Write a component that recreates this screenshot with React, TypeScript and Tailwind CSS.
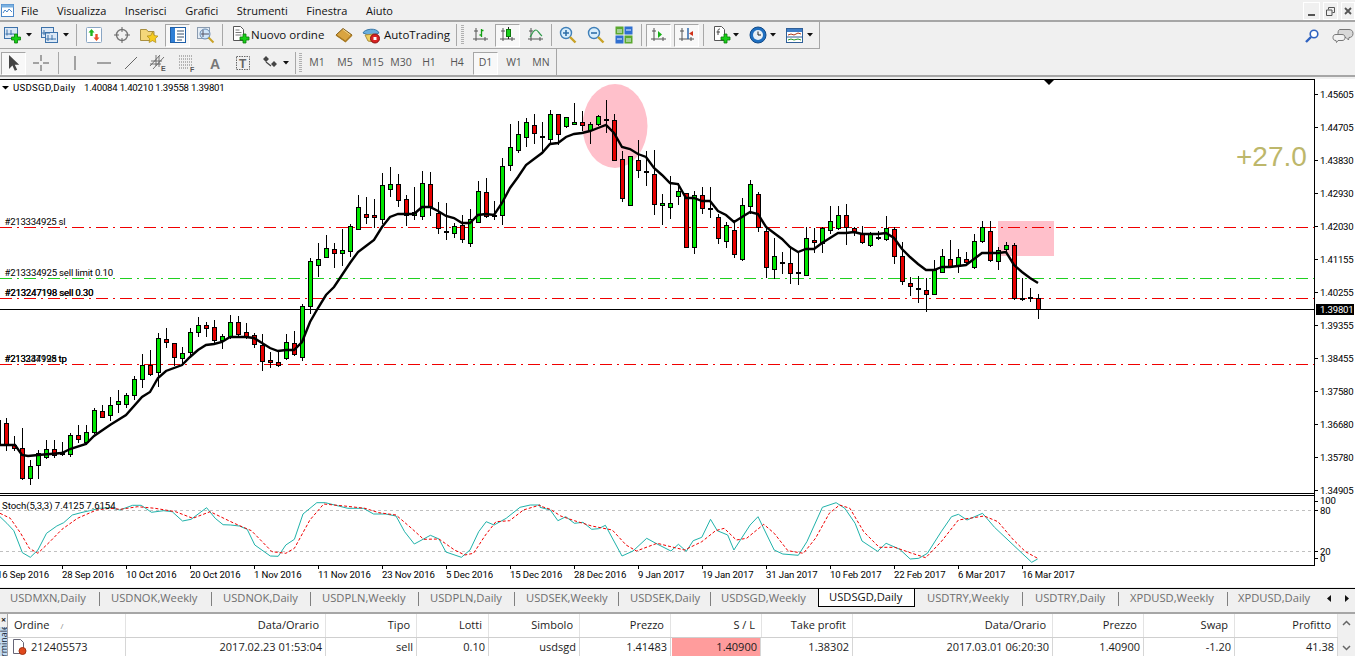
import React from "react";

const uiFont = "[font-family:'Open_Sans','Noto_Sans',sans-serif]";

// candles: body top, body bottom, wick top, wick bottom, colour (g/r/d)
type Candle = [number, number, number, number, string];
const candles: Candle[] = [
  [420,445,420,445,"r"],[423,445,418,450,"r"],[445,448,436,450,"r"],[448,478,428,479,"r"],[466,478,460,484,"g"],[453,465,450,478,"g"],
  [449,457,440,458,"g"],[449,455,440,457,"r"],[452,454,442,455,"d"],[435,454,433,456,"g"],[435,439,425,442,"r"],[432,442,425,444,"g"],
  [410,432,408,433,"g"],[411,417,405,417,"r"],[405,415,397,420,"g"],[401,404,390,412,"g"],[395,404,393,407,"g"],[379,395,376,399,"g"],
  [365,379,354,387,"g"],[365,374,350,375,"r"],[338,372,333,386,"g"],[339,342,328,347,"r"],[343,357,343,365,"r"],[353,358,347,363,"g"],
  [332,352,328,357,"g"],[325,332,317,336,"g"],[325,328,322,336,"r"],[327,340,320,343,"r"],[336,340,334,348,"g"],[322,336,315,338,"g"],
  [322,334,316,336,"r"],[332,336,323,338,"r"],[335,344,333,347,"r"],[345,361,334,370,"r"],[360,362,352,367,"r"],[362,365,350,366,"r"],
  [342,358,334,359,"g"],[343,354,331,355,"r"],[306,357,304,360,"g"],[261,306,258,313,"g"],[259,265,243,276,"g"],[248,257,235,257,"g"],
  [249,253,243,267,"r"],[250,253,229,265,"g"],[226,251,224,256,"g"],[207,229,195,229,"g"],[214,217,197,223,"r"],[215,217,199,227,"r"],
  [185,219,173,223,"g"],[184,189,167,196,"g"],[184,200,174,206,"r"],[199,215,195,225,"r"],[212,215,187,219,"g"],[183,216,171,219,"g"],
  [184,206,172,215,"r"],[213,228,202,233,"r"],[231,232,203,239,"d"],[226,233,223,237,"g"],[225,239,215,242,"r"],[219,243,209,246,"g"],
  [191,222,181,222,"g"],[192,216,178,217,"r"],[215,216,201,219,"d"],[166,215,158,224,"g"],[147,165,124,170,"g"],[134,150,121,152,"g"],
  [122,137,118,146,"g"],[125,133,114,143,"r"],[136,137,122,150,"d"],[114,139,110,142,"g"],[114,134,114,144,"r"],[117,126,117,127,"g"],
  [122,124,103,124,"g"],[122,125,111,130,"r"],[124,130,122,143,"g"],[116,124,115,125,"g"],[119,120,100,132,"d"],[120,160,114,160,"r"],
  [159,198,151,201,"r"],[156,205,156,205,"g"],[160,170,140,177,"r"],[171,172,151,185,"d"],[174,204,150,214,"r"],[203,205,194,224,"g"],
  [203,207,176,218,"g"],[191,196,183,204,"g"],[193,247,193,247,"r"],[195,247,191,253,"g"],[195,208,187,213,"r"],[208,209,187,217,"d"],
  [217,238,214,243,"r"],[225,241,222,247,"g"],[230,254,222,257,"r"],[205,259,198,260,"g"],[184,206,180,213,"g"],[194,227,192,231,"r"],
  [231,267,227,277,"r"],[256,269,238,278,"g"],[262,263,252,273,"d"],[263,273,247,283,"r"],[272,273,253,284,"d"],[238,275,227,275,"g"],
  [240,242,228,252,"r"],[228,243,227,252,"g"],[221,230,206,233,"g"],[215,228,206,229,"g"],[215,227,204,244,"r"],[228,232,227,235,"r"],
  [234,242,226,243,"r"],[234,245,232,246,"g"],[237,238,231,239,"d"],[228,239,216,240,"g"],[229,256,227,263,"r"],[256,281,242,284,"r"],
  [283,286,277,295,"r"],[288,289,276,302,"d"],[290,294,278,311,"r"],[270,294,260,294,"g"],[256,272,249,272,"g"],[259,266,240,266,"r"],
  [257,266,249,272,"g"],[259,262,252,263,"r"],[241,267,234,268,"g"],[227,241,221,242,"g"],[231,260,221,261,"r"],[250,261,247,269,"g"],
  [245,249,242,253,"g"],[245,298,243,299,"r"],[298,299,278,300,"d"],[297,298,288,301,"d"],[298,309,294,318,"r"],
];

const maLine =
  "0,445 15,445 22,455 28,456 38,455 62,453 70,449 86,444 94,436 110,425 126,415 142,397 150,392 158,378 166,371 182,365 190,357 198,350 206,345 214,344 222,342 230,337 246,337 254,338 262,343 270,348 278,351 286,350 294,350 302,342 310,322 318,308 326,295 334,287 342,275 350,263 358,252 366,246 374,240 382,227 390,217 398,214 414,214 422,207 430,207 438,211 446,216 454,218 462,223 470,223 478,215 486,214 494,215 502,203 510,188 518,177 526,165 534,159 542,153 550,144 558,143 566,137 574,134 582,133 590,131 598,128 606,125 614,133 622,147 630,149 638,154 646,157 654,168 662,175 670,183 678,184 686,198 694,198 702,201 710,201 718,211 726,215 734,222 742,217 750,212 758,214 766,227 774,233 782,239 790,247 798,252 806,249 814,249 822,243 830,238 838,233 846,233 854,232 862,234 870,234 878,234 886,233 894,238 902,249 910,257 918,264 926,270 934,270 942,267 950,267 958,266 966,265 974,259 982,253 990,253 998,253 1006,252 1014,265 1022,272 1030,278 1038,283";

// stochastic traces, measured from the two crops: [x, y] in crop units
const tealA = [[0,80],[20,100],[40,122],[65,188],[88,202],[110,180],[135,130],[165,108],[185,98],[210,75],[235,68],[260,62],[290,55],[320,53],[348,60],[385,46],[410,46],[440,67],[475,62],[500,65],[530,93],[555,88],[600,53],[625,85],[648,104],[670,105],[695,108],[718,118],[740,165],[785,198],[808,199],[830,165],[855,148],[880,72],[920,38],[945,38],[1010,55],[1055,55],[1085,72],[1120,72],[1150,78],[1175,125],[1203,162],[1250,136],[1275,147],[1295,186],[1340,202],[1365,180],[1390,125],[1412,95],[1435,105],[1470,85],[1510,52],[1540,45],[1568,45]];
const tealB = [[0,52],[30,60],[52,92],[75,80],[100,100],[125,97],[150,118],[170,116],[190,106],[238,198],[270,183],[310,145],[340,162],[380,183],[402,163],[425,184],[445,152],[470,142],[495,88],[515,122],[545,135],[563,180],[610,105],[633,80],[680,180],[705,192],[750,196],[775,155],[820,52],[860,38],[885,55],[915,100],[935,153],[980,184],[1005,160],[1045,178],[1075,207],[1100,205],[1125,190],[1165,125],[1195,80],[1215,73],[1240,90],[1285,70],[1320,112],[1400,190],[1428,217],[1445,207]];
const redA = [[0,70],[30,85],[60,130],[85,175],[110,190],[145,155],[180,118],[225,85],[280,60],[320,55],[350,58],[400,50],[450,55],[510,65],[560,85],[610,65],[680,100],[730,122],[790,185],[830,190],[855,175],[900,90],[940,42],[1000,48],[1060,55],[1100,68],[1150,75],[1195,115],[1230,148],[1275,147],[1320,180],[1350,195],[1375,190],[1410,135],[1440,95],[1480,92],[1520,60],[1568,45]];
const redB = [[0,48],[30,58],[60,78],[100,92],[150,108],[210,120],[250,165],[280,183],[340,160],[380,170],[420,180],[470,155],[510,122],[535,115],[570,150],[600,145],[650,103],[680,130],[720,182],[765,190],[800,145],[840,70],[870,45],[900,55],[940,125],[985,172],[1030,172],[1075,188],[1120,203],[1165,155],[1215,90],[1290,78],[1330,95],[1375,150],[1410,185],[1445,205]];

const toPoints = (a: number[][], b: number[][]) =>
  [
    ...a.map(([x, y]) => [x / 2.904, y]),
    ...b.map(([x, y]) => [540 + x / 2.904, y]),
  ]
    .map(([x, y]) => `${x.toFixed(1)},${(490 + y / 3).toFixed(1)}`)
    .join(" ");

const priceLabels: [string, number][] = [
  ["1.45605", 95],["1.44705", 128],["1.43830", 161],["1.42930", 194],["1.42030", 227],["1.41155", 260],["1.40255", 293],
  ["1.39355", 326],["1.38455", 359],["1.37580", 392],["1.36680", 425],["1.35780", 458],["1.34905", 491],
];

const dateLabels = [
  "16 Sep 2016","28 Sep 2016","10 Oct 2016","20 Oct 2016","1 Nov 2016","11 Nov 2016","23 Nov 2016","5 Dec 2016","15 Dec 2016",
  "28 Dec 2016","9 Jan 2017","19 Jan 2017","31 Jan 2017","10 Feb 2017","22 Feb 2017","6 Mar 2017","16 Mar 2017",
];

function Chart() {
  const chartText = { fontFamily: "Roboto, sans-serif", fontSize: 9.6, fill: "#000" };
  return (
    <svg width={1355} height={508} viewBox="0 79 1355 508" className="block bg-white">
      <ellipse cx={615} cy={126} rx={32.5} ry={42} fill="#ffc0cb" />
      <rect x={998} y={221} width={56} height={35} fill="#ffc0cb" />

      <g strokeDasharray="12 5 2 5">
        <line x1={0} x2={1314} y1={227.5} y2={227.5} stroke="#f00000" />
        <line x1={0} x2={1314} y1={278.5} y2={278.5} stroke="#20d020" />
        <line x1={0} x2={1314} y1={298.5} y2={298.5} stroke="#f00000" />
        <line x1={0} x2={1314} y1={364.5} y2={364.5} stroke="#f00000" />
      </g>
      <line x1={0} x2={1314} y1={309.5} y2={309.5} stroke="#000" />

      <g shapeRendering="crispEdges">
        {candles.map(([bt, bb, wt, wb, c], idx) => {
          const x = 6 + 8 * (idx - 1);
          return (
            <g key={idx}>
              <rect x={x} y={wt} width={1} height={wb - wt + 1} fill="#000" />
              <rect x={x - 2} y={bt} width={5} height={bb - bt + 1} fill="#000" />
              {c !== "d" && bb - bt > 1 && (
                <rect x={x - 1} y={bt + 1} width={3} height={bb - bt - 1} fill={c === "g" ? "#00e600" : "#e60000"} />
              )}
            </g>
          );
        })}
      </g>
      <polyline points={maLine} fill="none" stroke="#000" strokeWidth={2.4} />

      <path d="M1044 80h10l-5 5z" fill="#000" />
      <text x={1236} y={166} fontFamily="'Liberation Sans', sans-serif" fontSize={28} fill="#bdb76b">+27.0</text>

      <path d="M2 86h7l-3.5 3.5z" fill="#000" />
      <text x={13} y={91} {...chartText} letterSpacing={0.3}>USDSGD,Daily</text>
      <text x={84} y={91} {...chartText} letterSpacing={-0.2}>1.40084 1.40210 1.39558 1.39801</text>

      <text x={4.5} y={225} {...chartText} letterSpacing={-0.25}>#213334925 sl</text>
      <text x={4.5} y={276} {...chartText} letterSpacing={-0.2}>#213334925 sell limit 0.10</text>
      <text x={4.5} y={296} {...chartText} letterSpacing={-0.2}>#213247198 sell 0.30</text>
      <text x={4.8} y={296} {...chartText} letterSpacing={-0.2}>#213247198 sell 0.30</text>
      <text x={4.5} y={362} {...chartText} letterSpacing={-0.25}>#213334925 tp</text>
      <text x={4.5} y={362} {...chartText} letterSpacing={-0.25}>#213247198 tp</text>

      {/* frame */}
      <g shapeRendering="crispEdges" stroke="#000">
        <line x1={0} x2={1315} y1={79.5} y2={79.5} />
        <line x1={1314.5} x2={1314.5} y1={79} y2={566} />
        <line x1={0} x2={1315} y1={493.5} y2={493.5} />
        <line x1={0} x2={1315} y1={495.5} y2={495.5} />
        <line x1={0} x2={1315} y1={565.5} y2={565.5} />
        {priceLabels.map(([, y]) => (
          <line key={y} x1={1315} x2={1318} y1={y - 0.5} y2={y - 0.5} />
        ))}
        {[501, 510, 551, 558].map((y) => (
          <line key={y} x1={1315} x2={1318} y1={y + 0.5} y2={y + 0.5} />
        ))}
        {dateLabels.slice(1).map((d, i) => (
          <line key={d} x1={62.5 + 64 * i} x2={62.5 + 64 * i} y1={566} y2={569} />
        ))}
      </g>

      {priceLabels.map(([p, y]) => (
        <text key={p} x={1320} y={y + 2.5} {...chartText} letterSpacing={-0.2}>{p}</text>
      ))}
      <rect x={1316} y={304} width={38} height={11} fill="#000" />
      <text x={1320} y={313} {...chartText} fill="#fff" letterSpacing={-0.2}>1.39801</text>

      {/* stochastic */}
      <line x1={0} x2={1314} y1={510.5} y2={510.5} stroke="#c0c0c0" strokeDasharray="3 3" />
      <line x1={0} x2={1314} y1={551.5} y2={551.5} stroke="#c0c0c0" strokeDasharray="3 3" />
      <polyline points={toPoints(tealA, tealB)} fill="none" stroke="#20b2aa" />
      <polyline points={toPoints(redA, redB)} fill="none" stroke="#f00000" strokeDasharray="3 2" />
      <text x={2} y={508.5} {...chartText} letterSpacing={-0.05}>Stoch(5,3,3) 7.4125 7.6154</text>
      {[["100", 504], ["80", 513.5], ["20", 554.5], ["0", 561.5]].map(([t, y]) => (
        <text key={t} x={1320} y={y} {...chartText} letterSpacing={-0.2}>{t}</text>
      ))}

      {dateLabels.map((d, i) => (
        <text key={d} x={i === 0 ? -3 : -2 + 64 * i} y={578} {...chartText} letterSpacing={-0.12}>{d}</text>
      ))}
    </svg>
  );
}

/* ---------- toolbar icons ---------- */

type IconProps = { className?: string };

function Ico({ className = "", children }: IconProps & { children: React.ReactNode }) {
  return (
    <svg width={18} height={18} viewBox="0 0 18 18" className={`shrink-0 ${className}`}>
      {children}
    </svg>
  );
}

const Plus = ({ x = 0, y = 0 }: { x?: number; y?: number }) => (
  <path
    transform={`translate(${x} ${y})`}
    d="M3.5.5h3v3h3v3h-3v3h-3v-3h-3v-3h3z"
    fill="#18d018"
    stroke="#0a7a0a"
    strokeWidth={0.8}
  />
);

const Caret = ({ className = "" }: IconProps) => (
  <svg width={6} height={4} viewBox="0 0 6 4" className={`shrink-0 ${className}`}>
    <path d="M0 0h6L3 3.5z" fill="#111" />
  </svg>
);

const Sep = ({ className = "" }: IconProps) => <div className={`w-px h-[22px] bg-[#a8a8a8] shrink-0 ${className}`} />;

const Grip = ({ className = "" }: IconProps) => (
  <div className={`w-[3px] h-[20px] shrink-0 bg-[repeating-linear-gradient(to_bottom,#b0b0b0_0,#b0b0b0_1px,transparent_1px,transparent_2px)] ${className}`} />
);

function Pressed({ className = "", children }: IconProps & { children: React.ReactNode }) {
  return (
    <div className={`w-[25px] h-[23px] shrink-0 flex items-center justify-center bg-[#f8f8f8] border border-t-[#a6a6a6] border-l-[#a6a6a6] border-r-white border-b-white ${className}`}>
      {children}
    </div>
  );
}

const Axes = () => <path d="M4 2v13M1 13h15M2 5h4M13 11v4" fill="none" stroke="#555" strokeWidth={1} />;

const NewChartIcon = (p: IconProps) => (
  <Ico {...p}>
    <rect x={0.5} y={1.5} width={13} height={11} fill="#dbe8f6" stroke="#3d72aa" />
    <path d="M3 3.5v6M1.5 8h9M7 4v5" stroke="#3d72aa" fill="none" />
    <Plus x={7} y={7.5} />
  </Ico>
);
const ProfilesIcon = (p: IconProps) => (
  <Ico {...p}>
    <rect x={0.5} y={1.5} width={12} height={10} fill="#dbe8f6" stroke="#3d72aa" />
    <rect x={4.5} y={6.5} width={12} height={10} fill="#dbe8f6" stroke="#3d72aa" />
    <path d="M3 4v5M1 7h8M7 9v6M5 13h10M11 9v5" stroke="#3d72aa" fill="none" />
  </Ico>
);
const WatchIcon = (p: IconProps) => (
  <Ico {...p}>
    <rect x={1.5} y={1.5} width={15} height={15} rx={1} fill="#fff" stroke="#8aa6c4" />
    <path d="M6.5 3l3 3.5H7.7V10H5.3V6.5H3.5z" fill="#1fb51f" />
    <path d="M11.5 15l-3-3.5h1.8V8h2.4v3.5h1.8z" fill="#e8502a" />
  </Ico>
);
const CrossCircleIcon = (p: IconProps) => (
  <Ico {...p}>
    <circle cx={9} cy={9} r={5.5} fill="none" stroke="#777" strokeWidth={1.4} />
    <path d="M9 1v5M9 12v5M1 9h5M12 9h5" stroke="#666" />
  </Ico>
);
const FolderStarIcon = (p: IconProps) => (
  <Ico {...p}>
    <path d="M.5 3.5h6l1.500 2h6v9H.5z" fill="#f4d77a" stroke="#a98f3f" />
    <path d="M12.500 6l1.800 3.600 3.700.5-2.700 2.600.6 3.800-3.400-1.800-3.400 1.800.6-3.800-2.700-2.600 3.700-.5z" fill="#f7cc20" stroke="#a98a1c" strokeWidth={0.7} />
  </Ico>
);
const TerminalIcon = (p: IconProps) => (
  <Ico {...p}>
    <rect x={1.5} y={1.5} width={15} height={15} fill="#fff" stroke="#1f5fa8" />
    <rect x={2} y={2} width={4} height={14} fill="#2f7fd6" />
    <path d="M8 5h7M8 8h7M8 11h7M8 14h5" stroke="#39506b" />
  </Ico>
);
const ChartZoomIcon = (p: IconProps) => (
  <Ico {...p}>
    <rect x={0.5} y={1.5} width={12} height={11} fill="#e4edf6" stroke="#8a9bb0" />
    <circle cx={8} cy={8} r={5} fill="#cfe6fa" stroke="#6a8bb0" />
    <path d="M6 4v7M4 8h8" stroke="#556" />
    <path d="M11.5 11.5l5 5" stroke="#c9a227" strokeWidth={2} />
  </Ico>
);
const DocPlusIcon = (p: IconProps) => (
  <Ico {...p}>
    <path d="M1.5.5h7l3 3v11h-10z" fill="#fff" stroke="#555" />
    <path d="M3.5 4h4M3.5 6.5h6M3.5 9h6" stroke="#777" />
    <Plus x={7.5} y={7.5} />
  </Ico>
);
const GoldIcon = (p: IconProps) => (
  <Ico {...p}>
    <path d="M1 9l7-6.5 9 6.5-6.5 6.5z" fill="#d9a441" stroke="#7d5a1a" />
    <path d="M1 9l9.5 6.5 6.5-6.5" fill="none" stroke="#a97a22" strokeWidth={1.5} />
    <path d="M8 3.5l7 5.3" stroke="#f0d58c" />
  </Ico>
);
const AutoIcon = (p: IconProps) => (
  <Ico {...p}>
    <path d="M1 7c1-4 14-6 16 0l-8 3z" fill="#6aaedc" stroke="#3a78a8" />
    <path d="M3 9l9-1v8l-6-1z" fill="#f0d060" stroke="#a98f3f" />
    <circle cx={13} cy={12.5} r={4.5} fill="#d92323" stroke="#8b1212" />
    <rect x={11.5} y={11} width={3} height={3} fill="#fff" />
  </Ico>
);
const BarIcon = (p: IconProps) => (
  <Ico {...p}>
    <Axes />
    <path d="M9.5 3v8M7.5 9h2M9.5 4.500h2" stroke="#12a012" strokeWidth={1.3} fill="none" />
  </Ico>
);
const CandleIcon = (p: IconProps) => (
  <Ico {...p}>
    <Axes />
    <path d="M9.5 1v12" stroke="#222" />
    <rect x={7.5} y={3.5} width={4} height={7} fill="#18d018" stroke="#0a7a0a" />
  </Ico>
);
const LineIcon = (p: IconProps) => (
  <Ico {...p}>
    <Axes />
    <path d="M3 11c2-2 3-7 6-7 2 0 3 4 6 6" stroke="#2f9a4a" strokeWidth={1.2} fill="none" />
  </Ico>
);
const MagIcon = ({ sign, className }: IconProps & { sign: "+" | "-" }) => (
  <Ico className={className}>
    <circle cx={7} cy={7} r={5.5} fill="#d8eefc" stroke="#3f7fb8" strokeWidth={1.4} />
    <path d={sign === "+" ? "M4 7h6M7 4v6" : "M4 7h6"} stroke="#2f6fa8" strokeWidth={1.6} />
    <path d="M11 11l5.5 5.5" stroke="#c9a227" strokeWidth={2.4} />
  </Ico>
);
const TileIcon = (p: IconProps) => (
  <Ico {...p}>
    <rect x={0.5} y={0.5} width={8} height={8} fill="#5aa82e" />
    <rect x={9.5} y={0.5} width={8} height={8} fill="#2f6fd0" />
    <rect x={0.5} y={9.5} width={8} height={8} fill="#2f6fd0" />
    <rect x={9.5} y={9.5} width={8} height={8} fill="#5aa82e" />
    <path d="M2 4h5M11 4h5M2 13h5M11 13h5M2 6h5M11 15h5" stroke="#eef6ff" />
  </Ico>
);
const AutoScrollIcon = (p: IconProps) => (
  <Ico {...p}>
    <Axes />
    <path d="M8 5l4 3.5-4 3.5z" fill="#18b018" />
  </Ico>
);
const ShiftIcon = (p: IconProps) => (
  <Ico {...p}>
    <Axes />
    <path d="M10 2v11" stroke="#1f5fa8" strokeWidth={1.4} />
    <path d="M11 7.5l4-2.5v5z" fill="#d03018" />
  </Ico>
);
const IndicatorIcon = (p: IconProps) => (
  <Ico {...p}>
    <path d="M1.5.5h7l3 3v11h-10z" fill="#fff" stroke="#555" />
    <path d="M5 9V4.5c0-1 .7-1.500 2-1.500M3.500 6H7" stroke="#444" fill="none" />
    <Plus x={7.5} y={7.5} />
  </Ico>
);
const ClockIcon = (p: IconProps) => (
  <Ico {...p}>
    <circle cx={9} cy={9} r={8} fill="#1f6fc0" stroke="#124a88" />
    <circle cx={9} cy={9} r={5} fill="#e8f0f6" />
    <path d="M9 5.5V9h3" stroke="#222" fill="none" />
  </Ico>
);
const TemplateIcon = (p: IconProps) => (
  <Ico {...p}>
    <rect x={0.5} y={2.5} width={16} height={14} fill="#fff" stroke="#2f5f98" />
    <rect x={1} y={3} width={15} height={3} fill="#3f7fc8" />
    <path d="M2 9l3-1 3 1 4-2 3 1" stroke="#b03a1a" fill="none" />
    <path d="M1 11h15" stroke="#2f5f98" />
    <path d="M2 14l3-1 3 1 4-1 3 1" stroke="#2a9a2a" fill="none" />
  </Ico>
);

/* second row, drawing tools */
const ArrowTool = () => (
  <Ico>
    <path d="M4 1v14l3.400-3.400 2.400 5.200 2.400-1-2.400-5h4.400z" fill="#444" />
  </Ico>
);
const CrossTool = (p: IconProps) => (
  <Ico {...p}>
    <path d="M9 1v6M9 11v6M1 9h6M11 9h6" stroke="#555" />
  </Ico>
);
const VLineTool = (p: IconProps) => (
  <Ico {...p}>
    <path d="M9 2v14" stroke="#555" />
  </Ico>
);
const HLineTool = (p: IconProps) => (
  <Ico {...p}>
    <path d="M2 9h14" stroke="#555" />
  </Ico>
);
const TrendTool = (p: IconProps) => (
  <Ico {...p}>
    <path d="M3 15L15 3" stroke="#666" />
  </Ico>
);
const ChannelTool = (p: IconProps) => (
  <Ico {...p}>
    <path d="M1 12L11 1M4 15L15 3M2 7h11M1 10h11M7 1v11M10 2v11" stroke="#555" strokeWidth={0.8} />
    <text x={12} y={17} fontSize={7} fontFamily="'Liberation Sans',sans-serif" fontWeight={700} fill="#555">E</text>
  </Ico>
);
const FiboTool = (p: IconProps) => (
  <Ico {...p}>
    <path d="M1 2h14M1 5h14M1 8h14M1 11h14M1 14h10" stroke="#777" strokeDasharray="1 1" />
    <text x={12} y={18} fontSize={7} fontFamily="'Liberation Sans',sans-serif" fontWeight={700} fill="#555">F</text>
  </Ico>
);
const TextTool = (p: IconProps) => (
  <Ico {...p}>
    <text x={4} y={15} fontSize={14} fontFamily="'Liberation Sans',sans-serif" fontWeight={700} fill="#777">A</text>
  </Ico>
);
const LabelTool = (p: IconProps) => (
  <Ico {...p}>
    <rect x={2.5} y={2.5} width={13} height={13} fill="none" stroke="#666" strokeDasharray="1.5 1" />
    <text x={5} y={14} fontSize={12} fontFamily="'Liberation Sans',sans-serif" fontWeight={700} fill="#666">T</text>
  </Ico>
);
const ArrowsTool = (p: IconProps) => (
  <Ico {...p}>
    <path d="M2 5l3-3 3 3-3 3zM10 10l3-3 3 3-3 3z" fill="#444" />
    <path d="M5 8l5 4" stroke="#444" strokeWidth={1.2} />
  </Ico>
);

const SearchIcon = (p: IconProps) => (
  <svg width={14} height={14} viewBox="0 0 14 14" className={p.className}>
    <circle cx={9} cy={5} r={3.8} fill="#fff" stroke="#2f62c0" strokeWidth={1.6} />
    <path d="M6 8l-5 5" stroke="#2f62c0" strokeWidth={2.4} />
  </svg>
);
const ChatIcon = (p: IconProps) => (
  <svg width={22} height={16} viewBox="0 0 22 16" className={p.className}>
    <path d="M8 1.5h9c2 0 4 1 4 4s-2 4-4 4l-.5 2.500-2.500-2.500H9c-2 0-3-1-3-4s1-4 2-4z" fill="#d8d8d8" stroke="#777" />
    <path d="M4 6.500h6c2 0 3 1 3 3s-1 3-3 3H6l-1.500 2-.5-2c-2 0-3-1-3-3s1-3 3-3z" fill="#f2f2f2" stroke="#777" />
  </svg>
);

const tfClass = "shrink-0 text-center text-[10.5px] text-[#555]";

function Toolbars() {
  return (
    <div className={`h-[79px] bg-[#f0f0f0] overflow-hidden ${uiFont}`}>
      {/* menu bar */}
      <div className="h-[22px] border-b-2 border-[#a6a6a6] flex items-center relative text-[11px] text-[#111]">
        <svg width={13} height={15} viewBox="0 0 13 15" className="ml-px shrink-0">
          <rect x={0.5} y={1.5} width={12} height={12} fill="#fff" stroke="#4a86c8" />
          <rect x={0.5} y={1.5} width={12} height={3} fill="#7ab0e0" />
          <path d="M2 10l2-3 2 2 2-3 3 3" stroke="#4a86c8" fill="none" />
        </svg>
        <div className="flex gap-[18.5px] ml-[7px] mt-[2px]">
          {["File", "Visualizza", "Inserisci", "Grafici", "Strumenti", "Finestra", "Aiuto"].map((m) => (
            <span key={m}>{m}</span>
          ))}
        </div>
        <div className="ml-auto flex gap-[3px] pr-0 h-[18px] self-start mt-[2px]">
          <div className="w-[17px] border border-white flex items-end justify-center pb-[3px]"><div className="w-[7px] h-[2px] bg-[#555]" /></div>
          <div className="w-[15px] border border-white flex items-center justify-center">
            <svg width={9} height={9} viewBox="0 0 9 9"><path d="M2.500 2.500v-2h6v5h-2M.5 3h5.500v5.500H.5z" fill="none" stroke="#555" /></svg>
          </div>
          <div className="w-[14px] border border-white flex items-center justify-center">
            <svg width={8} height={8} viewBox="0 0 8 8"><path d="M1 1l6 6M7 1L1 7" stroke="#555" strokeWidth={1.8} /></svg>
          </div>
        </div>
      </div>

      {/* main toolbar */}
      <div className="flex">
        <div className="w-[820px] h-[27px] border-r border-b border-[#a6a6a6] flex items-center shrink-0">
          <NewChartIcon className="ml-[4px]" />
          <Caret className="ml-[4px]" />
          <ProfilesIcon className="ml-[9px]" />
          <Caret className="ml-[4px]" />
          <Sep className="ml-[7px]" />
          <WatchIcon className="ml-[8px]" />
          <CrossCircleIcon className="ml-[10px]" />
          <FolderStarIcon className="ml-[9px]" />
          <Pressed className="ml-[7px]"><TerminalIcon /></Pressed>
          <ChartZoomIcon className="ml-[7px]" />
          <Sep className="ml-[7px]" />
          <DocPlusIcon className="ml-[9px]" />
          <span className="ml-[1px] w-[74px] shrink-0 text-[11.5px] text-[#111] whitespace-nowrap">Nuovo ordine</span>
          <GoldIcon className="ml-[10px]" />
          <AutoIcon className="ml-[9px]" />
          <span className="ml-[4px] w-[68px] shrink-0 text-[11.5px] text-[#111] whitespace-nowrap">AutoTrading</span>
          <Sep className="ml-[4px]" />
          <Grip className="ml-[4px]" />
          <BarIcon className="ml-[8px]" />
          <Pressed className="ml-[5px]"><CandleIcon /></Pressed>
          <LineIcon className="ml-[7px]" />
          <Sep className="ml-[6px]" />
          <MagIcon sign="+" className="ml-[7px]" />
          <MagIcon sign="-" className="ml-[10px]" />
          <TileIcon className="ml-[10px]" />
          <Sep className="ml-[8px]" />
          <Pressed className="ml-[4px]"><AutoScrollIcon /></Pressed>
          <Pressed className="ml-[3px]"><ShiftIcon /></Pressed>
          <Sep className="ml-[4px]" />
          <IndicatorIcon className="ml-[9px]" />
          <Caret className="ml-[2px]" />
          <ClockIcon className="ml-[10px]" />
          <Caret className="ml-[3px]" />
          <TemplateIcon className="ml-[10px]" />
          <Caret className="ml-[3px]" />
        </div>
        <div className="flex-1 flex items-center h-[27px]">
          <SearchIcon className="ml-[485px]" />
          <ChatIcon className="ml-[13px]" />
        </div>
      </div>

      {/* drawing tools and timeframes */}
      <div className="flex">
        <div className="w-[557px] h-[26px] pt-[2px] border-r border-[#a6a6a6] flex items-center shrink-0">
          <Pressed className="ml-[1px]"><ArrowTool /></Pressed>
          <CrossTool className="ml-[6px]" />
          <Sep className="ml-[8px]" />
          <VLineTool className="ml-[7px]" />
          <HLineTool className="ml-[11px]" />
          <TrendTool className="ml-[9px]" />
          <ChannelTool className="ml-[9px]" />
          <FiboTool className="ml-[11px]" />
          <TextTool className="ml-[10px]" />
          <LabelTool className="ml-[10px]" />
          <ArrowsTool className="ml-[9px]" />
          <Caret className="ml-[4px]" />
          <Sep className="ml-[6px]" />
          <Grip className="ml-[3px]" />
          <div className={`${tfClass} w-[28px] ml-[1px]`}>M1</div>
          <div className={`${tfClass} w-[28px]`}>M5</div>
          <div className={`${tfClass} w-[28px]`}>M15</div>
          <div className={`${tfClass} w-[28px]`}>M30</div>
          <div className={`${tfClass} w-[28px]`}>H1</div>
          <div className={`${tfClass} w-[28px]`}>H4</div>
          <Pressed className="ml-[2px]"><span className="text-[10.5px] text-[#555]">D1</span></Pressed>
          <div className={`${tfClass} w-[30px] ml-[1px]`}>W1</div>
          <div className={`${tfClass} w-[24px]`}>MN</div>
        </div>
      </div>
      <div className="h-[2px] bg-[#a6a6a6]" />
    </div>
  );
}

const tabs: { name: string; cls: string }[] = [
  { name: "USDMXN,Daily", cls: "w-[100px] pl-[10px]" },
  { name: "USDNOK,Weekly", cls: "w-[112px] pl-[11px]" },
  { name: "USDNOK,Daily", cls: "w-[99px] pl-[11px]" },
  { name: "USDPLN,Weekly", cls: "w-[108px] pl-[11px]" },
  { name: "USDPLN,Daily", cls: "w-[96px] pl-[11px]" },
  { name: "USDSEK,Weekly", cls: "w-[104px] pl-[11px]" },
  { name: "USDSEK,Daily", cls: "w-[92px] pl-[11px]" },
  { name: "USDSGD,Weekly", cls: "w-[107px] pl-[10px]" },
];
const tabsAfter: { name: string; cls: string }[] = [
  { name: "USDTRY,Weekly", cls: "w-[108px] pl-[12px]" },
  { name: "USDTRY,Daily", cls: "w-[96px] pl-[12px]" },
  { name: "XPDUSD,Weekly", cls: "w-[109px] pl-[11px]" },
  { name: "XPDUSD,Daily", cls: "w-[100px] pl-[10px]" },
];

function TabStrip() {
  const base = "shrink-0 h-[14px] mt-px flex items-center whitespace-nowrap text-[#6e6e6e]";
  return (
    <div className={`h-[25px] pt-[1px] bg-[#f0f0f0] text-[11.2px] ${uiFont}`}>
      <div className="border-t border-black flex h-[19px] items-center relative">
        {tabs.map((t, i) => (
          <div key={t.name} className={`${base} ${t.cls} ${i < tabs.length - 1 ? "border-r border-[#808080]" : ""}`}>{t.name}</div>
        ))}
        <div className="w-[97px] shrink-0 h-[18px] self-start bg-white border-l border-r border-b border-black pl-[10px] text-[#111] whitespace-nowrap flex items-center">USDSGD,Daily</div>
        {tabsAfter.map((t, i) => (
          <div key={t.name} className={`${base} ${t.cls} ${i < tabsAfter.length - 1 ? "border-r border-[#808080]" : ""}`}>{t.name}</div>
        ))}
        <div className="absolute right-[6px] top-[6px] flex gap-[14px]">
          <svg width={4} height={7} viewBox="0 0 4 7"><path d="M4 0v7L0 3.500z" fill="#111" /></svg>
          <svg width={4} height={7} viewBox="0 0 4 7"><path d="M0 0v7l4-3.500z" fill="#111" /></svg>
        </div>
      </div>
    </div>
  );
}

const gridCols = "grid grid-cols-[118px_200px_91px_72px_91px_91px_91px_91px_200px_91px_91px_103px]";
const headers = ["Data/Orario", "Tipo", "Lotti", "Simbolo", "Prezzo", "S / L", "Take profit", "Data/Orario", "Prezzo", "Swap", "Profitto"];
const rowValues = ["2017.02.23 01:53:04", "sell", "0.10", "usdsgd", "1.41483", "1.40900", "1.38302", "2017.03.01 06:20:30", "1.40900", "-1.20", "41.38"];

function TradeTable() {
  return (
    <div className={`flex-1 flex border-t-2 border-[#a6a6a6] bg-white text-[11px] text-[#1c1c1c] overflow-hidden ${uiFont}`}>
      <div className="w-[8px] shrink-0 bg-[#f0f0f0] border-r border-[#a6a6a6] flex flex-col items-center overflow-hidden">
        <span className="text-[9px] leading-[9px] mt-[1px] font-bold text-[#222]">×</span>
        <div className="mt-[3px] w-full flex-1 bg-[#c4dcf2] overflow-hidden">
          <span className="block [writing-mode:vertical-rl] rotate-180 text-[9px] leading-[8px] text-[#123] whitespace-nowrap h-[40px]">Terminale</span>
        </div>
      </div>
      <div className="w-[1330px] shrink-0">
        <div className={`${gridCols} h-[24px] border-b border-[#cfcfcf]`}>
          <div className="border-r border-[#e3e3e3] pl-[6px] flex items-center">
            Ordine<span className="ml-[11px] text-[8px] text-[#888]">/</span>
          </div>
          {headers.map((h, i) => (
            <div key={i} className="border-r border-[#e3e3e3] pr-[6px] flex items-center justify-end">{h}</div>
          ))}
        </div>
        <div className={`${gridCols} h-[18px]`}>
          <div className="border-r border-[#d6d6d6] pl-[4px] flex items-center">
            <svg width={15} height={16} viewBox="0 0 15 16" className="shrink-0">
              <path d="M1.500.5h7l3 3v11h-10z" fill="#fff" stroke="#667" />
              <circle cx={10.500} cy={12} r={3.500} fill="#e0481c" stroke="#a03010" />
            </svg>
            <span className="ml-[4px]">212405573</span>
          </div>
          {rowValues.map((v, i) => (
            <div key={i} className={`border-r border-[#d6d6d6] flex items-center justify-end pr-[3px] ${i === 5 ? "bg-[#ff9c9c] mx-px" : ""}`}>{v}</div>
          ))}
        </div>
      </div>
      <div className="flex-1 flex flex-col items-center bg-[#f0f0f0] pt-[6px]">
        <svg width={9} height={6} viewBox="0 0 9 6"><path d="M1 5l3.500-3.500L8 5" fill="none" stroke="#666" strokeWidth={1.5} /></svg>
        <svg width={9} height={6} viewBox="0 0 9 6" className="mt-[19px]"><path d="M1 1l3.500 3.500L8 1" fill="none" stroke="#666" strokeWidth={1.5} /></svg>
      </div>
    </div>
  );
}

export default function App() {
  return (
    <div className="w-[1355px] h-[656px] flex flex-col overflow-hidden bg-[#f0f0f0]">
      <Toolbars />
      <Chart />
      <TabStrip />
      <TradeTable />
    </div>
  );
}
